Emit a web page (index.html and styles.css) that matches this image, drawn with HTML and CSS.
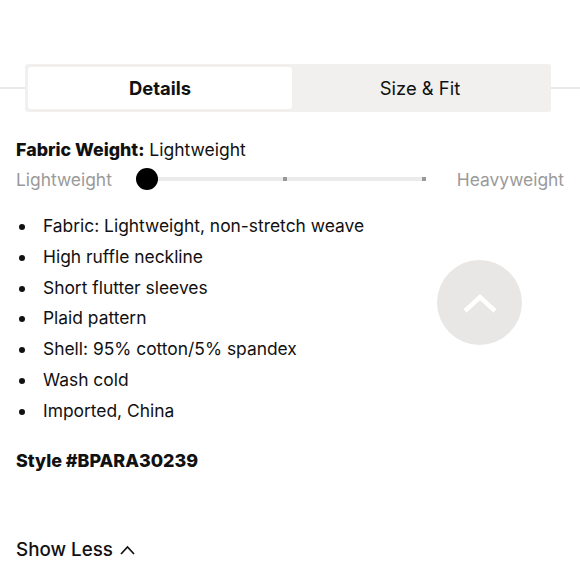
FILE: index.html
```html
<!DOCTYPE html>
<html>
<head>
<meta charset="utf-8">
<link rel="stylesheet" href="styles.css">
</head>
<body>
<div class="page">
  <div class="tabs-row">
    <div class="tabs">
      <div class="tab active">Details</div>
      <div class="tab">Size &amp; Fit</div>
    </div>
  </div>
  <div class="content">
    <div class="weight-title"><b>Fabric Weight:</b> Lightweight</div>
    <div class="slider-row">
      <span class="slabel">Lightweight</span>
      <div class="track">
        <span class="knob"></span>
        <span class="tick t1"></span>
        <span class="tick t2"></span>
      </div>
      <span class="slabel">Heavyweight</span>
    </div>
    <ul class="bullets">
      <li>Fabric: Lightweight, non-stretch weave</li>
      <li>High ruffle neckline</li>
      <li>Short flutter sleeves</li>
      <li>Plaid pattern</li>
      <li>Shell: 95% cotton/5% spandex</li>
      <li>Wash cold</li>
      <li>Imported, China</li>
    </ul>
    <div class="style-no">Style #BPARA30239</div>
    <div class="show-less">Show Less
      <svg width="17" height="11" viewBox="0 0 17 11"><path d="M2 10 L8.5 3 L15 10" fill="none" stroke="#111" stroke-width="1.7"/></svg>
    </div>
  </div>
  <div class="top-btn">
    <svg width="36" height="22" viewBox="0 0 36 22"><path d="M3 19 L18 5 L33 19" fill="none" stroke="#fff" stroke-width="4.5"/></svg>
  </div>
</div>
</body>
</html>
```
FILE: styles.css
```css
html, body { margin: 0; padding: 0; background: #fff; }
body { font-family: Inter, "Liberation Sans", sans-serif; color: #111; }
.page { position: relative; width: 580px; height: 580px; overflow: hidden; }
.tabs-row { position: relative; padding: 64px 29px 0 25px; }
.tabs-row::before { content: ""; position: absolute; left: 0; right: 0; top: 87px; height: 2px; background: #e8e8e8; }
.tabs { position: relative; display: flex; background: #f1f0ef; border-radius: 3px; padding: 3px; height: 42px; }
.tab { flex: 1; display: flex; align-items: center; justify-content: center; font-size: 18.4px; color: #111; }
.tab.active { flex: 0 0 264px; background: #fff; border-radius: 3px; font-weight: 700; }
.content { padding: 26px 0 0 16px; }
.weight-title { font-size: 17.5px; line-height: 24px; }
.weight-title b { font-weight: 800; font-size: 17.8px; }
.slider-row { display: flex; align-items: center; height: 30px; margin-top: 2px; }
.slabel { color: #9a9a9a; font-size: 17.4px; }
.track { position: relative; width: 278px; height: 4px; background: #ebebeb; margin: 0 32px 0 35px; }
.knob { position: absolute; left: -11px; top: -9px; width: 22px; height: 22px; border-radius: 50%; background: #000; }
.tick { position: absolute; top: 0; width: 4px; height: 4px; background: #999; }
.t1 { left: 136px; }
.t2 { left: 275px; }
.bullets { list-style: none; margin: 17px 0 0 0; padding: 0; }
.bullets li { position: relative; padding-left: 27px; font-size: 17.4px; line-height: 30.8px; }
.bullets li::before { content: ""; position: absolute; left: 3px; top: 13px; width: 6px; height: 6px; border-radius: 50%; background: #111; }
.style-no { font-weight: 800; font-size: 17.9px; margin-top: 22px; line-height: 24px; }
.show-less { font-size: 18.8px; font-weight: 500; margin-top: 65px; display: flex; align-items: center; gap: 6px; }
.top-btn { position: absolute; left: 437px; top: 260px; width: 85px; height: 85px; border-radius: 50%; background: #e9e7e5; display: flex; align-items: center; justify-content: center; }
```
